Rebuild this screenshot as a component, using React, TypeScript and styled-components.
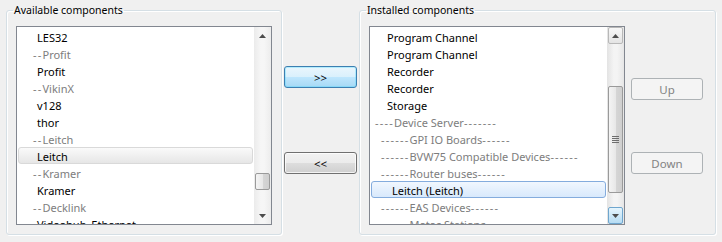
import React from "react";
import styled, { createGlobalStyle, css } from "styled-components";

const GlobalStyle = createGlobalStyle`
  html, body {
    margin: 0;
    padding: 0;
    background: #f0f0f0;
  }
  body {
    font-family: "Segoe UI", "Noto Sans", "Open Sans", sans-serif;
    font-size: 11px;
    color: #000;
  }
`;

const Window = styled.div`
  width: 722px;
  height: 242px;
  box-sizing: border-box;
  display: flex;
  align-items: flex-start;
  padding: 2px 0 0 6px;
  gap: 2px;
  overflow: hidden;
`;

const GroupBox = styled.fieldset<{ $width: number }>`
  width: ${(p) => p.$width}px;
  height: 233px;
  box-sizing: border-box;
  margin: 0;
  padding: 8px 9px 0 9px;
  border: 1px solid #d5dfe5;
  border-radius: 3px;
  box-shadow: inset 1px 1px 0 #fff, 1px 1px 0 #fff;
  display: flex;
  align-items: flex-start;
  gap: 6px;
  min-width: 0;
`;

const Legend = styled.legend`
  padding: 0 1px;
  margin-left: -3px;
  line-height: 16px;
  font-size: 10.5px;
  color: #000;
`;

const ListBox = styled.div<{ $width: number }>`
  width: ${(p) => p.$width}px;
  height: 199px;
  box-sizing: border-box;
  border: 1px solid #828790;
  background: #fff;
  display: flex;
  overflow: hidden;
`;

const Items = styled.div`
  flex: 1;
  padding-top: 1px;
  overflow: hidden;
`;

const Row = styled.div<{ $indent: number; $header?: boolean; $sel?: "focus" | "inactive" }>`
  height: 17px;
  line-height: 16px;
  padding-top: 1px;
  margin: 0 1px;
  box-sizing: border-box;
  padding-left: ${(p) => p.$indent}px;
  white-space: nowrap;
  color: ${(p) => (p.$header ? "#7d7d7d" : "#000")};
  border: 1px solid transparent;
  border-radius: 3px;
  ${(p) =>
    p.$sel === "inactive" &&
    css`
      background: linear-gradient(#fafafa, #e6e6e6);
      border-color: #d9d9d9;
    `}
  ${(p) =>
    p.$sel === "focus" &&
    css`
      background: linear-gradient(#f1f7fe, #d8e9fc);
      border-color: #84acdd;
    `}
`;

// the hyphens in the group headings run wider than this font draws them
const Dashes = styled.span`
  letter-spacing: 1.2px;
`;

const ScrollBar = styled.div<{ $active?: boolean }>`
  width: 17px;
  flex: none;
  display: flex;
  flex-direction: column;
  background: ${(p) =>
    p.$active
      ? "linear-gradient(90deg, #e3e3e3, #f4f4f4 40%, #f4f4f4 60%, #e6e6e6)"
      : "linear-gradient(90deg, #ebebeb, #f6f6f6 40%, #f6f6f6 60%, #ececec)"};
`;

const ArrowButton = styled.div<{ $framed?: boolean; $hot?: boolean }>`
  height: 17px;
  display: flex;
  align-items: center;
  justify-content: center;
  box-sizing: border-box;
  margin: 0 1px;
  border-radius: 2px;
  border: 1px solid transparent;
  ${(p) =>
    p.$framed &&
    css`
      border-color: #b8b8b8;
      background: linear-gradient(#f7f7f7, #e4e4e4);
    `}
  ${(p) =>
    p.$hot &&
    css`
      border-color: #6fa6ce;
      background: linear-gradient(#e6f5fd, #b6dcf3);
    `}
`;

const Track = styled.div<{ $thumbTop: number; $thumbHeight: number }>`
  flex: 1;
  display: flex;
  flex-direction: column;
  padding-top: ${(p) => p.$thumbTop}px;
  & > div {
    height: ${(p) => p.$thumbHeight}px;
  }
`;

const Thumb = styled.div`
  margin: 0 1px;
  box-sizing: border-box;
  border: 1px solid #9a9a9a;
  border-radius: 2px;
  background: linear-gradient(90deg, #f4f4f4, #e8e8e8 50%, #d6d6d6 51%, #cfcfcf);
  display: flex;
  align-items: center;
  justify-content: center;
`;

const Grip = styled.div`
  width: 7px;
  height: 7px;
  background: repeating-linear-gradient(#6e6e6e 0 1px, transparent 1px 2px);
`;

const Column = styled.div<{ $top: number; $gap: number; $width: number }>`
  width: ${(p) => p.$width}px;
  display: flex;
  flex-direction: column;
  gap: ${(p) => p.$gap}px;
  padding-top: ${(p) => p.$top}px;
  flex: none;
`;

const Button = styled.button<{ $variant?: "default" | "normal" | "disabled" }>`
  height: 22px;
  box-sizing: border-box;
  font: inherit;
  font-size: 11.5px;
  border-radius: 3px;
  padding: 0;
  color: #000;
  border: 1px solid #707070;
  background: linear-gradient(#f2f2f2, #ebebeb 50%, #dddddd 51%, #cfcfcf);
  box-shadow: inset 0 0 0 1px rgba(255, 255, 255, 0.75);
  ${(p) =>
    p.$variant === "default" &&
    css`
      border-color: #3c7fb1;
      background: linear-gradient(#eaf6fd, #d9f0fc 50%, #bee6fd 51%, #a7d9f5);
      box-shadow: inset 0 0 0 1px #48d8fb55;
    `}
  ${(p) =>
    p.$variant === "disabled" &&
    css`
      border-color: #adb2b5;
      background: #f4f4f4;
      color: #838383;
      box-shadow: none;
    `}
`;

function Arrow({ up }: { up?: boolean }) {
  return (
    <svg width="7" height="4" viewBox="0 0 7 4">
      <path d={up ? "M3.5 0 L7 4 L0 4 Z" : "M0 0 L7 0 L3.5 4 Z"} fill="#4d4d4d" />
    </svg>
  );
}

type Item = { text: string; indent: number; header?: boolean; sel?: "focus" | "inactive" };

const available: Item[] = [
  { text: "LES32", indent: 18 },
  { text: "--Profit", indent: 14, header: true },
  { text: "Profit", indent: 18 },
  { text: "--VikinX", indent: 14, header: true },
  { text: "v128", indent: 18 },
  { text: "thor", indent: 18 },
  { text: "--Leitch", indent: 14, header: true },
  { text: "Leitch", indent: 18, sel: "inactive" },
  { text: "--Kramer", indent: 14, header: true },
  { text: "Kramer", indent: 18 },
  { text: "--Decklink", indent: 14, header: true },
  { text: "Videohub_Ethernet", indent: 18 },
];

const installed: Item[] = [
  { text: "Program Channel", indent: 15 },
  { text: "Program Channel", indent: 15 },
  { text: "Recorder", indent: 15 },
  { text: "Recorder", indent: 15 },
  { text: "Storage", indent: 15 },
  { text: "----Device Server-------", indent: 3, header: true },
  { text: "------GPI IO Boards------", indent: 9, header: true },
  { text: "------BVW75 Compatible Devices------", indent: 9, header: true },
  { text: "------Router buses------", indent: 9, header: true },
  { text: "Leitch (Leitch)", indent: 20, sel: "focus" },
  { text: "------EAS Devices------", indent: 9, header: true },
  { text: "------Metec Stations------", indent: 9, header: true },
];

function Label({ text }: { text: string }) {
  const m = text.match(/^(-*)(.*?)(-*)$/);
  if (!m) return <>{text}</>;
  return (
    <>
      {m[1] && <Dashes>{m[1]}</Dashes>}
      {m[2]}
      {m[3] && <Dashes>{m[3]}</Dashes>}
    </>
  );
}

function List({
  items,
  width,
  active,
  thumbTop,
  thumbHeight,
}: {
  items: Item[];
  width: number;
  active?: boolean;
  thumbTop: number;
  thumbHeight: number;
}) {
  return (
    <ListBox $width={width}>
      <Items>
        {items.map((it, i) => (
          <Row key={i} $indent={it.indent} $header={it.header} $sel={it.sel}>
            <Label text={it.text} />
          </Row>
        ))}
      </Items>
      <ScrollBar $active={active}>
        <ArrowButton $framed={active}>
          <Arrow up />
        </ArrowButton>
        <Track $thumbTop={thumbTop} $thumbHeight={thumbHeight}>
          <Thumb>{active && <Grip />}</Thumb>
        </Track>
        <ArrowButton $hot={active}>
          <Arrow />
        </ArrowButton>
      </ScrollBar>
    </ListBox>
  );
}

export default function App() {
  return (
    <>
      <GlobalStyle />
      <Window>
        <GroupBox $width={276}>
          <Legend>Available components</Legend>
          <List items={available} width={256} thumbTop={129} thumbHeight={17} />
        </GroupBox>
        <Column $width={73} $top={64} $gap={64}>
          <Button $variant="default">&gt;&gt;</Button>
          <Button $variant="normal">&lt;&lt;</Button>
        </Column>
        <GroupBox $width={357}>
          <Legend>Installed components</Legend>
          <List items={installed} width={256} active thumbTop={42} thumbHeight={107} />
          <Column $width={72} $top={52} $gap={52}>
            <Button $variant="disabled">Up</Button>
            <Button $variant="disabled">Down</Button>
          </Column>
        </GroupBox>
      </Window>
    </>
  );
}
